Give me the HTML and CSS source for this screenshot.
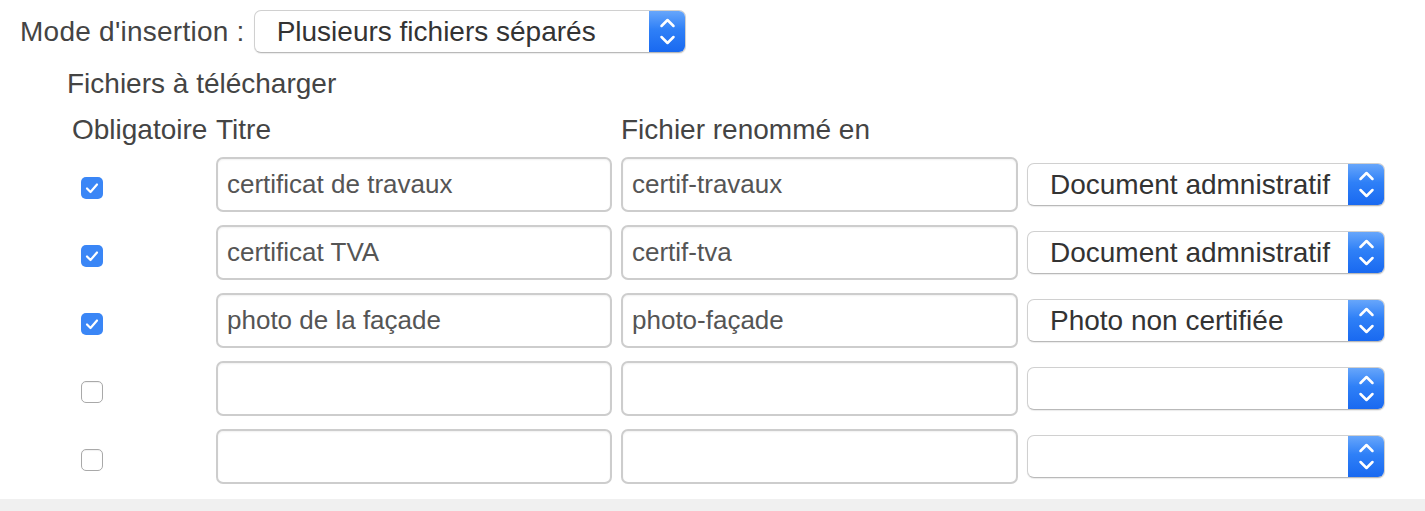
FILE: index.html
```html
<!DOCTYPE html>
<html lang="fr">
<head>
<meta charset="utf-8">
<title>Mode d'insertion</title>
<link rel="stylesheet" href="styles.css">
</head>
<body>
<div class="mode">
  <span class="mode-label">Mode d'insertion :</span>
  <div class="select select-mode">
    <span class="select-value">Plusieurs fichiers séparés</span>
    <span class="select-btn"><svg viewBox="0 0 37 43" width="37" height="43"><path d="M12.5 16 L18.5 10 L24.5 16 M12.5 27 L18.5 33 L24.5 27" fill="none" stroke="#fff" stroke-width="2.5" stroke-linecap="round" stroke-linejoin="round"/></svg></span>
  </div>
</div>

<div class="files">
  <div class="files-title">Fichiers à télécharger</div>
  <div class="grid">
    <div class="head">Obligatoire</div>
    <div class="head">Titre</div>
    <div class="head">Fichier renommé en</div>
    <div class="head"></div>

    <span class="check checked"><svg viewBox="0 0 22 22" width="22" height="22"><path d="M6 11.5 L9.5 15 L16 7.5" fill="none" stroke="#fff" stroke-width="2.2" stroke-linecap="round" stroke-linejoin="round"/></svg></span>
    <input class="field" type="text" value="certificat de travaux">
    <input class="field" type="text" value="certif-travaux">
    <div class="select select-row"><span class="select-value">Document admnistratif</span><span class="select-btn"><svg viewBox="0 0 37 43" width="37" height="43"><path d="M12.5 16 L18.5 10 L24.5 16 M12.5 27 L18.5 33 L24.5 27" fill="none" stroke="#fff" stroke-width="2.5" stroke-linecap="round" stroke-linejoin="round"/></svg></span></div>

    <span class="check checked"><svg viewBox="0 0 22 22" width="22" height="22"><path d="M6 11.5 L9.5 15 L16 7.5" fill="none" stroke="#fff" stroke-width="2.2" stroke-linecap="round" stroke-linejoin="round"/></svg></span>
    <input class="field" type="text" value="certificat TVA">
    <input class="field" type="text" value="certif-tva">
    <div class="select select-row"><span class="select-value">Document admnistratif</span><span class="select-btn"><svg viewBox="0 0 37 43" width="37" height="43"><path d="M12.5 16 L18.5 10 L24.5 16 M12.5 27 L18.5 33 L24.5 27" fill="none" stroke="#fff" stroke-width="2.5" stroke-linecap="round" stroke-linejoin="round"/></svg></span></div>

    <span class="check checked"><svg viewBox="0 0 22 22" width="22" height="22"><path d="M6 11.5 L9.5 15 L16 7.5" fill="none" stroke="#fff" stroke-width="2.2" stroke-linecap="round" stroke-linejoin="round"/></svg></span>
    <input class="field" type="text" value="photo de la façade">
    <input class="field" type="text" value="photo-façade">
    <div class="select select-row"><span class="select-value">Photo non certifiée</span><span class="select-btn"><svg viewBox="0 0 37 43" width="37" height="43"><path d="M12.5 16 L18.5 10 L24.5 16 M12.5 27 L18.5 33 L24.5 27" fill="none" stroke="#fff" stroke-width="2.5" stroke-linecap="round" stroke-linejoin="round"/></svg></span></div>

    <span class="check"></span>
    <input class="field" type="text" value="">
    <input class="field" type="text" value="">
    <div class="select select-row"><span class="select-value"></span><span class="select-btn"><svg viewBox="0 0 37 43" width="37" height="43"><path d="M12.5 16 L18.5 10 L24.5 16 M12.5 27 L18.5 33 L24.5 27" fill="none" stroke="#fff" stroke-width="2.5" stroke-linecap="round" stroke-linejoin="round"/></svg></span></div>

    <span class="check"></span>
    <input class="field" type="text" value="">
    <input class="field" type="text" value="">
    <div class="select select-row"><span class="select-value"></span><span class="select-btn"><svg viewBox="0 0 37 43" width="37" height="43"><path d="M12.5 16 L18.5 10 L24.5 16 M12.5 27 L18.5 33 L24.5 27" fill="none" stroke="#fff" stroke-width="2.5" stroke-linecap="round" stroke-linejoin="round"/></svg></span></div>
  </div>
</div>

<div class="footer"></div>
</body>
</html>
```

FILE: styles.css
```css
html, body {
  margin: 0;
  padding: 0;
  background: #fff;
  overflow: hidden;
}

body {
  font-family: "Liberation Sans", Arial, Helvetica, sans-serif;
  color: #444;
}

.mode {
  display: flex;
  align-items: center;
  padding: 10px 0 0 20px;
  gap: 9px;
}

.mode-label {
  font-size: 28px;
  line-height: 43px;
  color: #444;
  letter-spacing: 0.25px;
}

.select {
  display: flex;
  align-items: stretch;
  height: 43px;
  box-sizing: border-box;
  background: #fff;
  border: 1px solid #d0d0d0;
  border-bottom-color: #b9b9b9;
  border-radius: 7px;
  box-shadow: 0 1px 1px rgba(0, 0, 0, 0.08);
  overflow: hidden;
}

.select-mode {
  width: 432px;
}

.select-row {
  width: 358px;
  align-self: center;
  margin-top: -1px;
}

.select-value {
  flex: 1;
  padding-left: 22px;
  font-size: 28px;
  line-height: 41px;
  color: #333;
  white-space: nowrap;
  overflow: hidden;
}

.select-btn {
  width: 37px;
  flex: none;
  margin: -1px -1px -1px 0;
  background: linear-gradient(#6aa8fb, #2f80f7 45%, #1868f0);
  display: flex;
  align-items: center;
  justify-content: center;
}

.select-btn svg {
  display: block;
}

.files {
  padding-left: 67px;
  margin-top: 15px;
}

.files-title {
  font-size: 28px;
  line-height: 32px;
  color: #444;
}

.grid {
  display: grid;
  grid-template-columns: 135px 396px 397px 358px;
  column-gap: 9px;
  row-gap: 13px;
  margin-left: 5px;
  margin-top: 16px;
}

.head {
  font-size: 28px;
  line-height: 28px;
  color: #444;
  white-space: nowrap;
}

.check {
  width: 22px;
  height: 22px;
  box-sizing: border-box;
  border-radius: 5px;
  border: 1px solid #a9a9a9;
  background: #fff;
  box-shadow: inset 0 1px 1px rgba(0, 0, 0, 0.06);
  margin-left: 9px;
  align-self: center;
  margin-top: 6px;
  display: flex;
  align-items: center;
  justify-content: center;
}

.check.checked {
  border: none;
  background: #3a86f6;
  box-shadow: none;
}

.check svg {
  display: block;
}

.field {
  height: 55px;
  box-sizing: border-box;
  width: 100%;
  margin: 0;
  border: 2px solid #cdcdcd;
  border-radius: 7px;
  padding: 0 9px;
  font-family: "Liberation Sans", Arial, Helvetica, sans-serif;
  font-size: 26px;
  color: #555;
  background: #fff;
  box-shadow: inset 0 1px 2px rgba(0, 0, 0, 0.06);
  outline: none;
}

.footer {
  margin-top: 15px;
  height: 12px;
  background: #f0f0f0;
}
```
